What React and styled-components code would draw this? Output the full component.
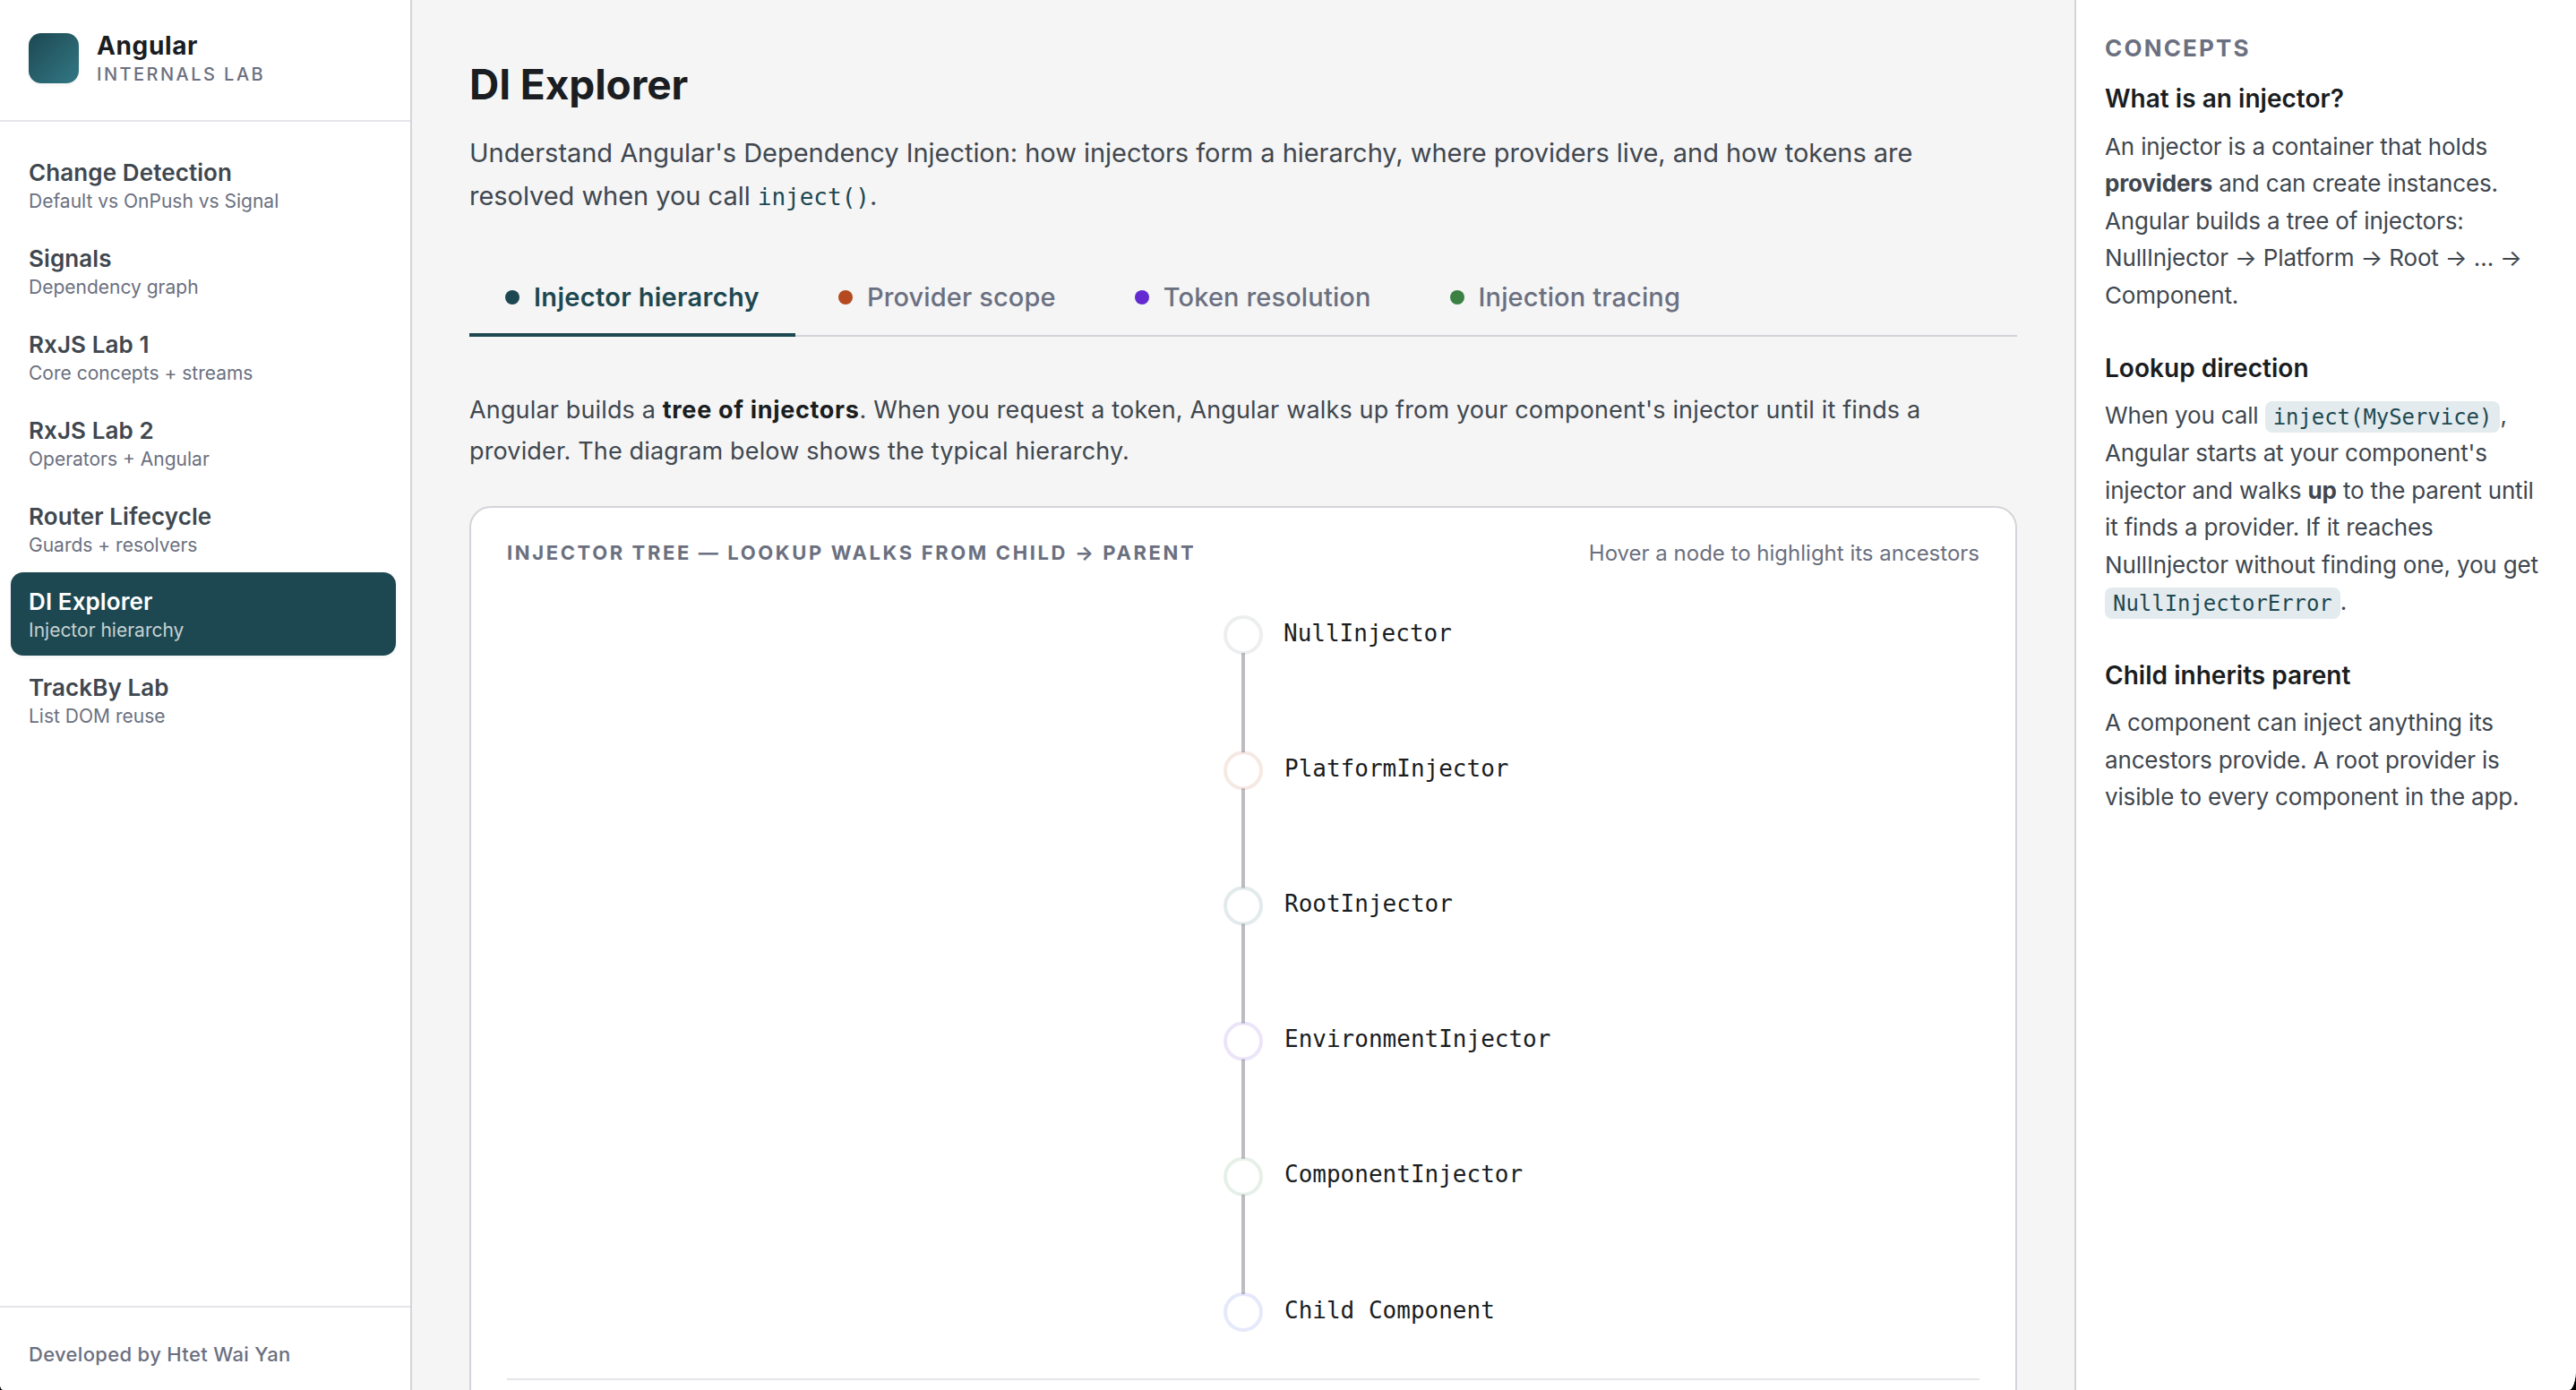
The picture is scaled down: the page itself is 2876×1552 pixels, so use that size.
import React, { useState } from 'react'
import styled, { createGlobalStyle } from 'styled-components'

const navItems = [
  { title: 'Change Detection', sub: 'Default vs OnPush vs Signal' },
  { title: 'Signals', sub: 'Dependency graph' },
  { title: 'RxJS Lab 1', sub: 'Core concepts + streams' },
  { title: 'RxJS Lab 2', sub: 'Operators + Angular' },
  { title: 'Router Lifecycle', sub: 'Guards + resolvers' },
  { title: 'DI Explorer', sub: 'Injector hierarchy' },
  { title: 'TrackBy Lab', sub: 'List DOM reuse' },
]

const tabs = [
  { label: 'Injector hierarchy', color: '#1d4851' },
  { label: 'Provider scope', color: '#b54a20' },
  { label: 'Token resolution', color: '#622ad0' },
  { label: 'Injection tracing', color: '#3c8044' },
]

const nodes = [
  { label: 'NullInjector', color: '#edeeef' },
  { label: 'PlatformInjector', color: '#f6e9e4' },
  { label: 'RootInjector', color: '#e3eaeb' },
  { label: 'EnvironmentInjector', color: '#ece5fa' },
  { label: 'ComponentInjector', color: '#e6f0e8' },
  { label: 'Child Component', color: '#e5e9fa' },
]

const STEP = 151.2
const nodeY = (i) => 50 + i * STEP

export default function App() {
  const [page, setPage] = useState('DI Explorer')
  const [tab, setTab] = useState('Injector hierarchy')

  return (
    <>
      <GlobalStyle />
      <Shell>
        <Sidebar>
          <Brand>
            <Logo />
            <div>
              <BrandName>Angular</BrandName>
              <BrandSub>INTERNALS LAB</BrandSub>
            </div>
          </Brand>
          <Nav>
            {navItems.map((item) => (
              <NavItem key={item.title} $active={item.title === page} onClick={() => setPage(item.title)}>
                <strong>{item.title}</strong>
                <span>{item.sub}</span>
              </NavItem>
            ))}
          </Nav>
          <SidebarFooter>Developed by Htet Wai Yan</SidebarFooter>
        </Sidebar>

        <Main>
          <Title>DI Explorer</Title>
          <Intro>
            Understand Angular's Dependency Injection: how injectors form a hierarchy, where providers
            live, and how tokens are resolved when you call <code>inject()</code>.
          </Intro>
          <Tabs>
            {tabs.map((t) => (
              <Tab key={t.label} $active={t.label === tab} onClick={() => setTab(t.label)}>
                <Dot $color={t.color} />
                {t.label}
              </Tab>
            ))}
          </Tabs>
          <Description>
            Angular builds a <strong>tree of injectors</strong>. When you request a token, Angular walks
            up from your component's injector until it finds a provider. The diagram below shows the
            typical hierarchy.
          </Description>
          <Card>
            <CardHead>
              <h2>INJECTOR TREE — LOOKUP WALKS FROM CHILD → PARENT</h2>
              <p>Hover a node to highlight its ancestors</p>
            </CardHead>
            <Tree viewBox="0 0 1644 880">
              {nodes.map((n, i) => (
                <g key={n.label}>
                  <circle cx="822" cy={nodeY(i)} r="20" fill="#fff" stroke={n.color} strokeWidth="4" />
                  <text x={i === 0 ? 867 : 868} y={nodeY(i) + 6.5}>{n.label}</text>
                </g>
              ))}
              {nodes.slice(1).map((n, i) => (
                <line key={n.label} x1="822" x2="822" y1={nodeY(i) + 20} y2={nodeY(i + 1) - 20} />
              ))}
            </Tree>
            <CardFoot />
          </Card>
        </Main>

        <Aside>
          <AsideTitle>CONCEPTS</AsideTitle>
          <Concept>
            <h3>What is an injector?</h3>
            <p>
              An injector is a container that holds <strong>providers</strong> and can create instances.
              Angular builds a tree of injectors: NullInjector → Platform → Root → … → Component.
            </p>
          </Concept>
          <Concept>
            <h3>Lookup direction</h3>
            <p>
              When you call <code>inject(MyService)</code>, Angular starts at your component's injector
              and walks <strong>up</strong> to the parent until it finds a provider. If it reaches
              NullInjector without finding one, you get <code>NullInjectorError</code>.
            </p>
          </Concept>
          <Concept>
            <h3>Child inherits parent</h3>
            <p>
              A component can inject anything its ancestors provide. A root provider is visible to every
              component in the app.
            </p>
          </Concept>
        </Aside>
      </Shell>
    </>
  )
}

const GlobalStyle = createGlobalStyle`
  * {
    box-sizing: border-box;
    margin: 0;
    padding: 0;
  }
  body {
    background: #000;
    color: #40474f;
    font-family: Inter, 'Liberation Sans', sans-serif;
    overflow: hidden;
  }
  code {
    font-family: 'DejaVu Sans Mono', monospace;
    color: #1d4851;
    letter-spacing: 0;
    line-height: 1;
  }
`

const Shell = styled.div`
  display: flex;
  height: 100vh;
  background: #f5f5f5;
  overflow: hidden;
  border-radius: 0 0 8px 4px / 0 0 24px 6px;
`

const Sidebar = styled.aside`
  display: flex;
  flex-direction: column;
  width: 460px;
  flex-shrink: 0;
  background: #fff;
  border-right: 2px solid #d4d4da;
`

const Brand = styled.div`
  display: flex;
  align-items: center;
  gap: 20px;
  height: 136px;
  padding: 34px 32px 38px;
  border-bottom: 2px solid #e5e5ea;
`

const Logo = styled.div`
  width: 56px;
  height: 56px;
  border-radius: 14px;
  background: linear-gradient(135deg, #1d4851, #327885);
  box-shadow: 0 2px 4px rgba(0, 0, 0, 0.05);
`

const BrandName = styled.div`
  font-size: 28px;
  font-weight: 700;
  line-height: 34px;
  letter-spacing: 0.022em;
  color: #1a1d21;
`

const BrandSub = styled.div`
  margin-top: 3px;
  font-size: 20px;
  font-weight: 500;
  line-height: 25px;
  letter-spacing: 0.123em;
  color: #6b7080;
`

const Nav = styled.nav`
  display: flex;
  flex-direction: column;
  gap: 3.2px;
  flex: 1;
  padding: 24px 16px 24px 12px;
`

const NavItem = styled.a`
  display: flex;
  flex-direction: column;
  height: 92.6px;
  padding: 15.4px 20px 0;
  border-radius: 14px;
  cursor: pointer;
  background: ${(p) => (p.$active ? '#1d4851' : 'transparent')};
  box-shadow: ${(p) => (p.$active ? '0 2px 4px rgba(0, 0, 0, 0.05)' : 'none')};
  strong {
    font-size: 26px;
    font-weight: 600;
    line-height: 35px;
    letter-spacing: 0.0038em;
    color: ${(p) => (p.$active ? '#fff' : '#40474f')};
  }
  span {
    margin-top: 2px;
    font-size: 21px;
    line-height: 26px;
    color: ${(p) => (p.$active ? '#c6d1d3' : '#6b7080')};
  }
`

const SidebarFooter = styled.footer`
  height: 94px;
  padding: 36px 32px 0;
  border-top: 2px solid #e5e5ea;
  font-size: 22px;
  font-weight: 500;
  line-height: 32px;
  letter-spacing: 0.0149em;
  color: #6b7080;
`

const Main = styled.main`
  flex: 1;
  min-width: 0;
  padding: 66px 64px 0;
  overflow: hidden;
`

const Title = styled.h1`
  font-size: 46px;
  font-weight: 700;
  line-height: 56px;
  letter-spacing: -0.0018em;
  color: #1a1d21;
`

const Intro = styled.p`
  margin-top: 24.5px;
  font-size: 29px;
  line-height: 48px;
  letter-spacing: -0.0013em;
  code {
    font-size: 26px;
  }
`

const Tabs = styled.div`
  display: flex;
  gap: 8px;
  margin-top: 47px;
  border-bottom: 2px solid #d4d4da;
`

const Tab = styled.button`
  display: flex;
  align-items: center;
  gap: 16px;
  margin-bottom: -2px;
  padding: 24px 40px 22.5px;
  border: none;
  border-bottom: 4px solid ${(p) => (p.$active ? '#1d4851' : 'transparent')};
  background: none;
  cursor: pointer;
  font-family: inherit;
  font-size: 29px;
  font-weight: ${(p) => (p.$active ? 600 : 500)};
  line-height: 36px;
  letter-spacing: ${(p) => (p.$active ? '0.0107em' : '0.0046em')};
  color: ${(p) => (p.$active ? '#1d4851' : '#6b7080')};
`

const Dot = styled.span`
  width: 16px;
  height: 16px;
  border-radius: 50%;
  background: ${(p) => p.$color};
`

const Description = styled.p`
  margin-top: 58.5px;
  font-size: 27px;
  line-height: 46px;
  letter-spacing: 0.0055em;
  strong {
    font-weight: 700;
    letter-spacing: 0.025em;
    color: #1a1d21;
  }
`

const Card = styled.section`
  margin-top: 38.5px;
  padding: 34px 40px 40px;
  border: 2px solid #d4d4da;
  border-radius: 24px;
  background: #fff;
`

const CardHead = styled.div`
  display: flex;
  justify-content: space-between;
  align-items: flex-start;
  height: 33px;
  color: #6b7080;
  h2 {
    font-size: 22px;
    font-weight: 700;
    line-height: 32px;
    letter-spacing: 0.119em;
  }
  p {
    font-size: 24px;
    line-height: 33px;
  }
`

const Tree = styled.svg`
  display: block;
  width: 100%;
  height: 880px;
  margin-top: 25px;
  text {
    font-family: 'DejaVu Sans Mono', monospace;
    font-size: 26px;
    fill: #1a1d21;
  }
  line {
    stroke: #8f8f99;
    stroke-width: 4;
    stroke-opacity: 0.6;
  }
`

const CardFoot = styled.div`
  height: 80px;
  border-top: 2px solid #e5e5ea;
`

const Aside = styled.aside`
  width: 560px;
  flex-shrink: 0;
  padding: 38px 32px;
  border-left: 2px solid #d4d4da;
  background: #fff;
`

const AsideTitle = styled.h2`
  margin-bottom: 22px;
  font-size: 26px;
  font-weight: 700;
  line-height: 32px;
  letter-spacing: 0.084em;
  color: #6b7080;
`

const Concept = styled.section`
  margin-bottom: 42.5px;
  h3 {
    margin-bottom: 14.5px;
    font-size: 28px;
    font-weight: 600;
    line-height: 36px;
    letter-spacing: 0.001em;
    color: #1a1d21;
  }
  p {
    font-size: 26px;
    line-height: 41.6px;
    letter-spacing: -0.0062em;
  }
  strong {
    font-weight: 700;
  }
  code {
    padding: 0.15em 0.38em;
    border-radius: 8px;
    background: #e3ebee;
    font-size: 0.92em;
  }
`
